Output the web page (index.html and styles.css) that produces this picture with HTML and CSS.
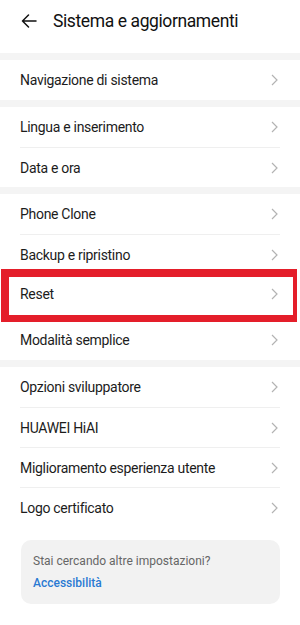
FILE: index.html
```html
<!DOCTYPE html>
<html lang="it">
<head>
<meta charset="utf-8">
<title>Sistema e aggiornamenti</title>
<link rel="stylesheet" href="styles.css">
</head>
<body>
<div class="page">
  <header class="header">
    <svg class="back" width="16" height="14" viewBox="0 0 16 14"><path d="M15 7H1.5M7.5 1L1.5 7l6 6" fill="none" stroke="#111" stroke-width="1.5" stroke-linecap="round" stroke-linejoin="round"/></svg>
    <h1 class="title">Sistema e aggiornamenti</h1>
  </header>

  <div class="band"></div>
  <div class="group">
    <div class="row"><span>Navigazione di sistema</span><svg class="chev" width="7" height="12" viewBox="0 0 7 12"><path d="M1 1l5 5-5 5" fill="none" stroke="#b3b3b3" stroke-width="1.2"/></svg></div>
  </div>

  <div class="band"></div>
  <div class="group">
    <div class="row"><span>Lingua e inserimento</span><svg class="chev" width="7" height="12" viewBox="0 0 7 12"><path d="M1 1l5 5-5 5" fill="none" stroke="#b3b3b3" stroke-width="1.2"/></svg></div>
    <div class="row div"><span>Data e ora</span><svg class="chev" width="7" height="12" viewBox="0 0 7 12"><path d="M1 1l5 5-5 5" fill="none" stroke="#b3b3b3" stroke-width="1.2"/></svg></div>
  </div>

  <div class="band"></div>
  <div class="group">
    <div class="row"><span>Phone Clone</span><svg class="chev" width="7" height="12" viewBox="0 0 7 12"><path d="M1 1l5 5-5 5" fill="none" stroke="#b3b3b3" stroke-width="1.2"/></svg></div>
    <div class="row div"><span>Backup e ripristino</span><svg class="chev" width="7" height="12" viewBox="0 0 7 12"><path d="M1 1l5 5-5 5" fill="none" stroke="#b3b3b3" stroke-width="1.2"/></svg></div>
    <div class="row reset"><span>Reset</span><svg class="chev" width="7" height="12" viewBox="0 0 7 12"><path d="M1 1l5 5-5 5" fill="none" stroke="#b3b3b3" stroke-width="1.2"/></svg><div class="highlight"></div></div>
    <div class="row after-reset"><span>Modalità semplice</span><svg class="chev" width="7" height="12" viewBox="0 0 7 12"><path d="M1 1l5 5-5 5" fill="none" stroke="#b3b3b3" stroke-width="1.2"/></svg></div>
  </div>

  <div class="band"></div>
  <div class="group">
    <div class="row"><span>Opzioni sviluppatore</span><svg class="chev" width="7" height="12" viewBox="0 0 7 12"><path d="M1 1l5 5-5 5" fill="none" stroke="#b3b3b3" stroke-width="1.2"/></svg></div>
    <div class="row div"><span>HUAWEI HiAI</span><svg class="chev" width="7" height="12" viewBox="0 0 7 12"><path d="M1 1l5 5-5 5" fill="none" stroke="#b3b3b3" stroke-width="1.2"/></svg></div>
    <div class="row div"><span>Miglioramento esperienza utente</span><svg class="chev" width="7" height="12" viewBox="0 0 7 12"><path d="M1 1l5 5-5 5" fill="none" stroke="#b3b3b3" stroke-width="1.2"/></svg></div>
    <div class="row div"><span>Logo certificato</span><svg class="chev" width="7" height="12" viewBox="0 0 7 12"><path d="M1 1l5 5-5 5" fill="none" stroke="#b3b3b3" stroke-width="1.2"/></svg></div>
  </div>

  <div class="card">
    <div class="card-q">Stai cercando altre impostazioni?</div>
    <div class="card-link">Accessibilità</div>
  </div>
</div>
</body>
</html>
```

FILE: styles.css
```css
* { box-sizing: border-box; }
html, body { margin: 0; padding: 0; background: #ffffff; }
body { font-family: Roboto, "Noto Sans", "Liberation Sans", sans-serif; color: #1c1c1c; }
.page { width: 300px; height: 625px; overflow: hidden; position: relative; }

.header { height: 53px; display: flex; align-items: center; padding: 0 0 12px 21px; }
.back { flex: none; margin-right: 16px; }
.title { margin: 0; font-size: 17.5px; font-weight: 400; color: #111; letter-spacing: -0.4px; }

.band { height: 7px; background: #f4f4f4; }
.group { background: #fff; }

.row { height: 40px; margin: 0 20px; display: flex; align-items: center; justify-content: space-between; font-size: 14px; letter-spacing: -0.3px; position: relative; }
.row.div { border-top: 1px solid #efefef; }
.chev { flex: none; margin-right: 2px; }

.reset .highlight { position: absolute; left: -19px; right: -17px; top: -5px; bottom: -8px; border: 8px solid #e41e2a; border-right-width: 4px; border-bottom-width: 7px; pointer-events: none; }
.row.after-reset { height: 46px; padding-top: 6px; }

.card { margin: 13px 20px 0 21px; height: 64px; background: #f2f2f2; border-radius: 10px; padding: 14px 12px 0 12px; }
.card-q { font-size: 12px; color: #666; line-height: 15px; }
.card-link { font-size: 12px; color: #2a7ad2; font-weight: 500; margin-top: 7px; line-height: 15px; }
```
